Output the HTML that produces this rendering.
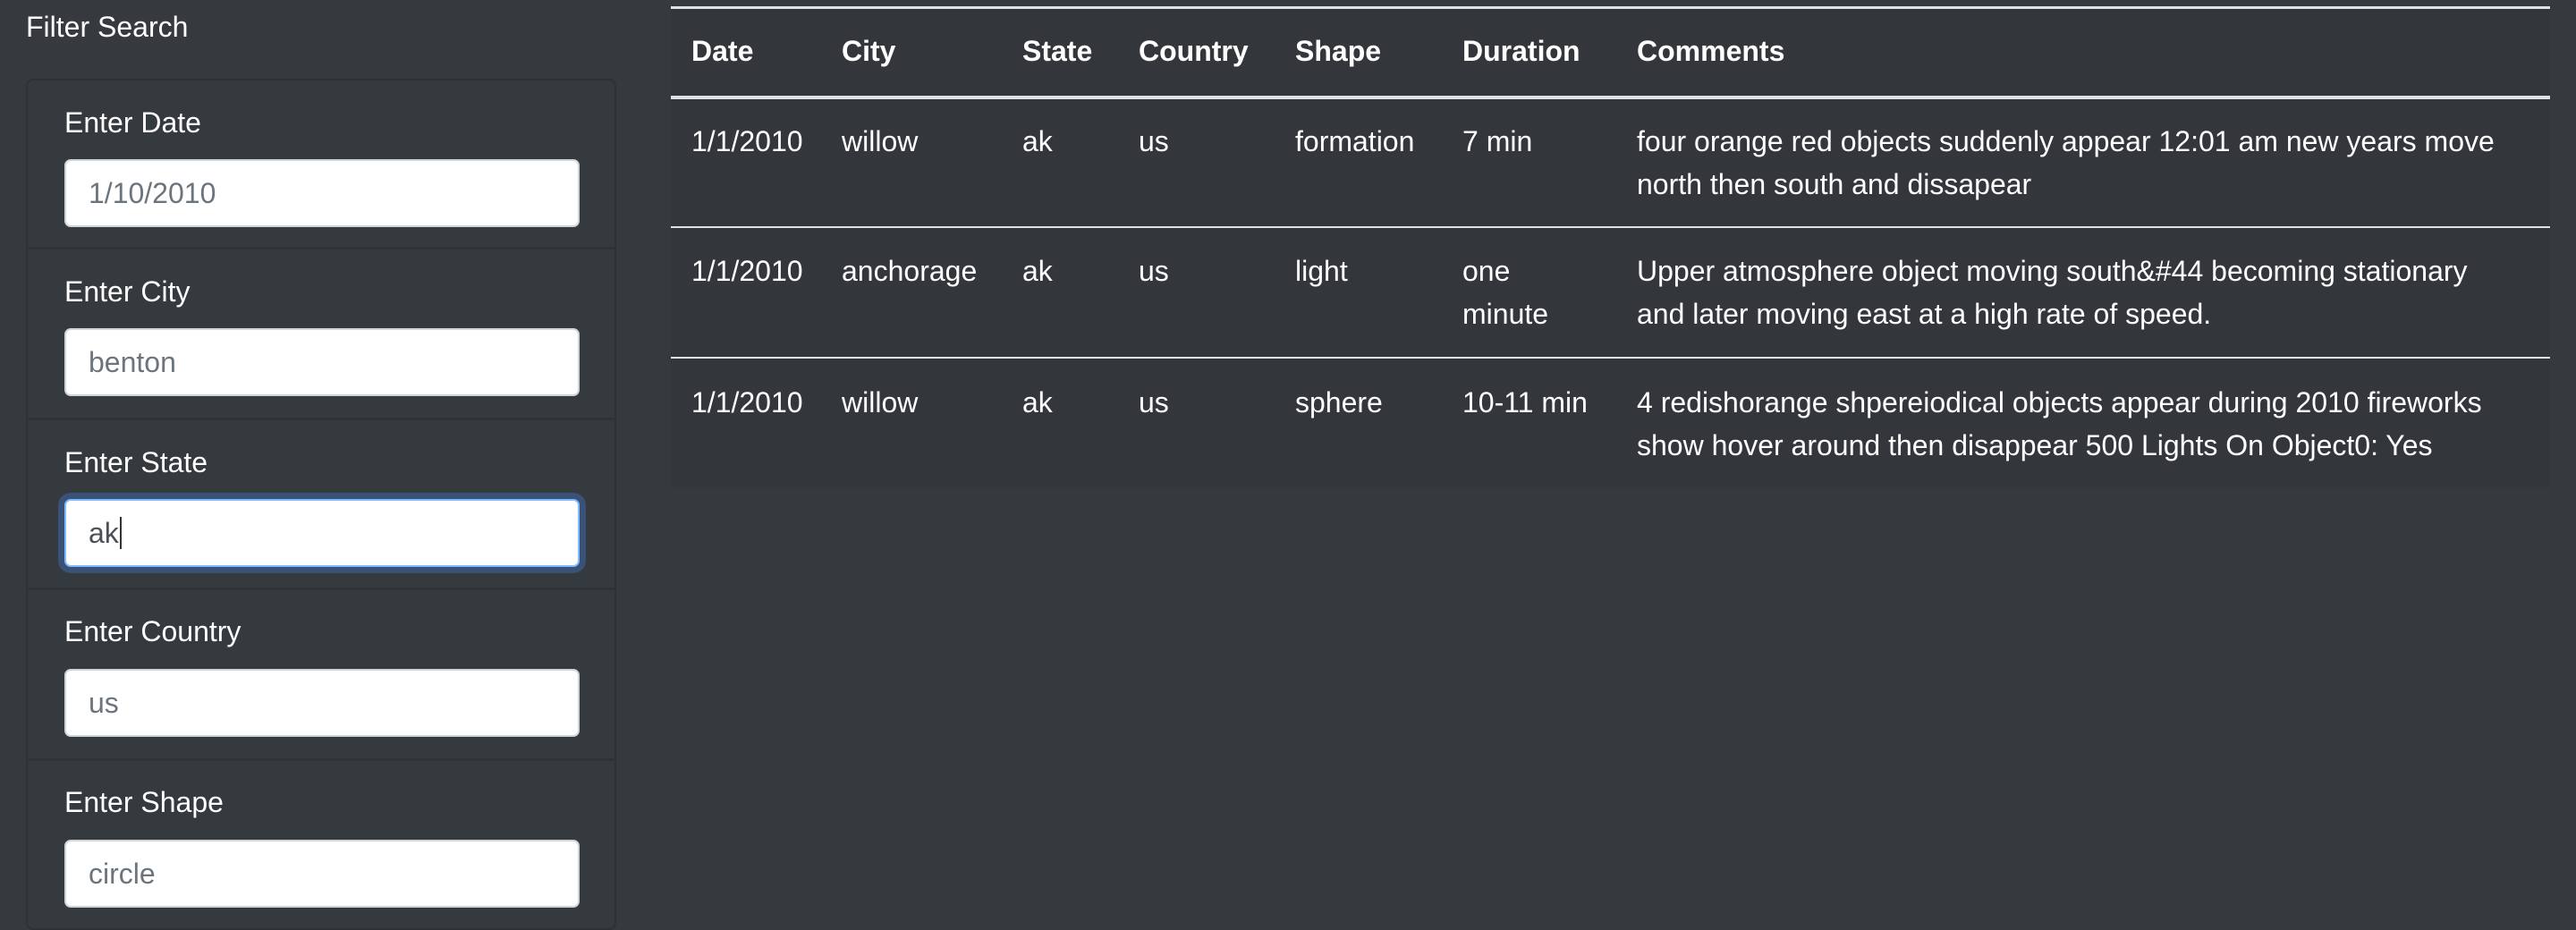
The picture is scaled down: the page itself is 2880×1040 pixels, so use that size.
<!DOCTYPE html>
<html><head><meta charset="utf-8"><style>
*{box-sizing:border-box;margin:0;padding:0}
body{width:2880px;height:1039px;background:#363a3f;font-family:"Liberation Sans",Arial,sans-serif;color:#fff;position:relative;overflow:hidden}
.t{position:absolute;white-space:nowrap}
.fs{left:29px;top:12px;font-size:32px}
.card{position:absolute;left:29px;top:88px;width:660px;height:952px;border:2px solid #2e3237;border-radius:8px;background:#353a3f}
.sep{position:absolute;left:29px;width:660px;height:3px;background:#2f3338}
.lbl{font-size:32px;left:72px}
.inp{position:absolute;left:72px;width:576px;height:76px;background:#fff;border:2px solid #ced4da;border-radius:7px;font-size:32px;color:#6c757d;padding-left:25px;line-height:72px}
.focus{border-color:#80bdff;box-shadow:0 0 0 7px #3a5278;color:#495057}
.tbl{position:absolute;left:750px;top:7px;width:2101px;height:538px;background:#33373c;border-top:3px solid #dee2e6}
.h{position:absolute;left:0;width:100%;background:#dee2e6}
.c{position:absolute;font-size:32px;line-height:48px;white-space:nowrap}
.b{font-weight:bold}
</style></head><body>
<div class="t fs">Filter Search</div>
<div class="card"></div>
<div class="sep" style="top:276px"></div>
<div class="sep" style="top:467px"></div>
<div class="sep" style="top:657px"></div>
<div class="sep" style="top:848px"></div>
<div class="t lbl" style="top:119px">Enter Date</div>
<div class="inp" style="top:178px">1/10/2010</div>
<div class="t lbl" style="top:308px">Enter City</div>
<div class="inp" style="top:367px">benton</div>
<div class="t lbl" style="top:499px">Enter State</div>
<div class="inp focus" style="top:558px">ak<span style="border-left:2px solid #333;margin-left:1px"></span></div>
<div class="t lbl" style="top:688px">Enter Country</div>
<div class="inp" style="top:748px">us</div>
<div class="t lbl" style="top:879px">Enter Shape</div>
<div class="inp" style="top:939px">circle</div>

<div class="tbl">
<div class="h" style="top:97px;height:4px"></div>
<div class="h" style="top:243px;height:2px"></div>
<div class="h" style="top:389px;height:2px"></div>
<div class="c b" style="left:23px;top:23px">Date</div>
<div class="c b" style="left:191px;top:23px">City</div>
<div class="c b" style="left:393px;top:23px">State</div>
<div class="c b" style="left:523px;top:23px">Country</div>
<div class="c b" style="left:698px;top:23px">Shape</div>
<div class="c b" style="left:885px;top:23px">Duration</div>
<div class="c b" style="left:1080px;top:23px">Comments</div>

<div class="c" style="left:23px;top:124px">1/1/2010</div>
<div class="c" style="left:191px;top:124px">willow</div>
<div class="c" style="left:393px;top:124px">ak</div>
<div class="c" style="left:523px;top:124px">us</div>
<div class="c" style="left:698px;top:124px">formation</div>
<div class="c" style="left:885px;top:124px">7 min</div>
<div class="c" style="left:1080px;top:124px">four orange red objects suddenly appear 12:01 am new years move<br>north then south and dissapear</div>

<div class="c" style="left:23px;top:269px">1/1/2010</div>
<div class="c" style="left:191px;top:269px">anchorage</div>
<div class="c" style="left:393px;top:269px">ak</div>
<div class="c" style="left:523px;top:269px">us</div>
<div class="c" style="left:698px;top:269px">light</div>
<div class="c" style="left:885px;top:269px">one<br>minute</div>
<div class="c" style="left:1080px;top:269px">Upper atmosphere object moving south&amp;#44 becoming stationary<br>and later moving east at a high rate of speed.</div>

<div class="c" style="left:23px;top:416px">1/1/2010</div>
<div class="c" style="left:191px;top:416px">willow</div>
<div class="c" style="left:393px;top:416px">ak</div>
<div class="c" style="left:523px;top:416px">us</div>
<div class="c" style="left:698px;top:416px">sphere</div>
<div class="c" style="left:885px;top:416px">10-11 min</div>
<div class="c" style="left:1080px;top:416px">4 redishorange shpereiodical objects appear during 2010 fireworks<br>show hover around then disappear 500 Lights On Object0: Yes</div>
</div>
</body></html>
